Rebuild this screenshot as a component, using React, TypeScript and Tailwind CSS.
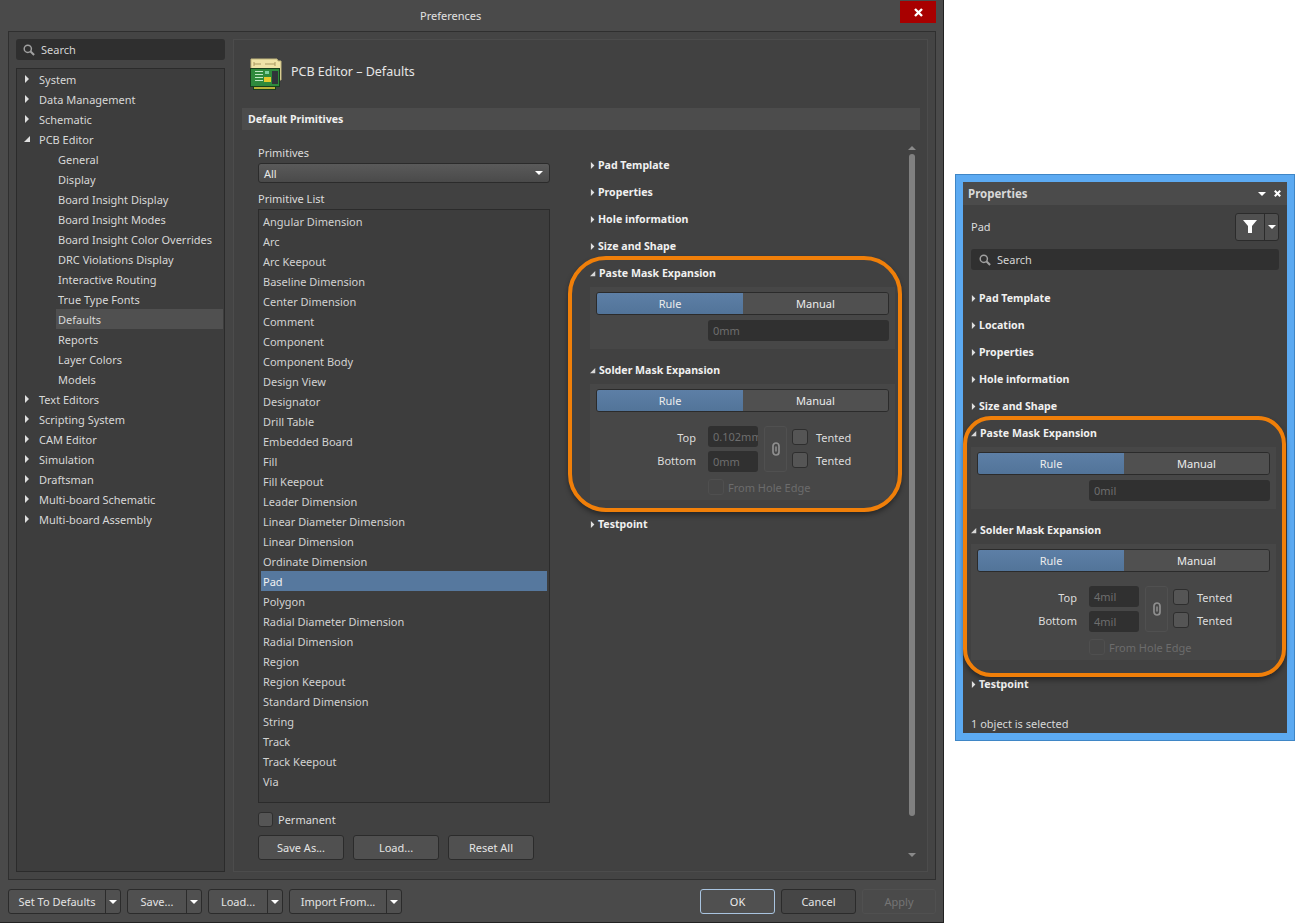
import React from 'react';

const treeItems: [string, number, string][] = [
  ['System', 0, 'closed'], ['Data Management', 0, 'closed'], ['Schematic', 0, 'closed'], ['PCB Editor', 0, 'open'],
  ['General', 1, ''], ['Display', 1, ''], ['Board Insight Display', 1, ''], ['Board Insight Modes', 1, ''],
  ['Board Insight Color Overrides', 1, ''], ['DRC Violations Display', 1, ''], ['Interactive Routing', 1, ''],
  ['True Type Fonts', 1, ''], ['Defaults', 1, 'selected'], ['Reports', 1, ''], ['Layer Colors', 1, ''], ['Models', 1, ''],
  ['Text Editors', 0, 'closed'], ['Scripting System', 0, 'closed'], ['CAM Editor', 0, 'closed'], ['Simulation', 0, 'closed'],
  ['Draftsman', 0, 'closed'], ['Multi-board Schematic', 0, 'closed'], ['Multi-board Assembly', 0, 'closed'],
];

const primitives = [
  'Angular Dimension', 'Arc', 'Arc Keepout', 'Baseline Dimension', 'Center Dimension', 'Comment', 'Component',
  'Component Body', 'Design View', 'Designator', 'Drill Table', 'Embedded Board', 'Fill', 'Fill Keepout',
  'Leader Dimension', 'Linear Diameter Dimension', 'Linear Dimension', 'Ordinate Dimension', 'Pad', 'Polygon',
  'Radial Diameter Dimension', 'Radial Dimension', 'Region', 'Region Keepout', 'Standard Dimension', 'String',
  'Track', 'Track Keepout', 'Via',
];

function Tri({ dir, className = '' }: { dir: 'right' | 'open' | 'down' | 'up'; className?: string }) {
  const pts = { right: '1,0 5,4 1,8', open: '0,7 6,7 6,1', down: '0,2 8,2 4,6', up: '0,6 8,6 4,2' }[dir];
  return (
    <svg width="8" height="8" viewBox="0 0 8 8" className={`shrink-0 ${className}`}>
      <polygon points={pts} fill="currentColor" />
    </svg>
  );
}

function SearchIcon({ size = 12 }: { size?: number }) {
  return (
    <svg width={size} height={size} viewBox="0 0 13 13" fill="none" stroke="#a0a0a0" className="shrink-0">
      <circle cx="5.2" cy="5.2" r="3.9" strokeWidth="1.6" />
      <path d="M8.2 8.2 L12 12" strokeWidth="2.2" />
    </svg>
  );
}

function LinkIcon() {
  return (
    <svg width="8" height="14" viewBox="0 0 8 14" fill="none" stroke="#8f8f8f">
      <rect x="1" y="1" width="6" height="12" rx="3" strokeWidth="1.7" />
      <path d="M4 4.5 V9.5" strokeWidth="1.5" />
    </svg>
  );
}

function PcbIcon() {
  return (
    <svg width="33" height="33" viewBox="0 0 33 33" className="shrink-0">
      <path d="M1 1 H27 L28 3 H31 V22 H1 Z" fill="#efe4a8" stroke="#c2b67c" strokeWidth="1" />
      <path d="M4 6 H11 M15 6 H25 M4 4 V8 M25 4 V8" stroke="#a89a62" strokeWidth="1" fill="none" />
      <rect x="0.5" y="10.5" width="29" height="18" fill="#2f8a3d" stroke="#173f1c" strokeWidth="1" />
      <rect x="5" y="13" width="8" height="1" fill="#bfe7c4" />
      <rect x="5" y="16" width="8" height="1" fill="#bfe7c4" />
      <rect x="5" y="19" width="8" height="1" fill="#bfe7c4" />
      <rect x="5" y="22" width="8" height="1" fill="#bfe7c4" />
      <rect x="14" y="19" width="7" height="5" fill="#e4c92c" />
      <rect x="22" y="13" width="6" height="13" fill="#30343a" />
      <rect x="15" y="13" width="4" height="3" fill="#7fd0a0" />
      <rect x="3.5" y="28.5" width="22" height="3" fill="#b9b03a" stroke="#173f1c" strokeWidth="1" />
    </svg>
  );
}

function Check({ disabled = false, className = 'w-[16px] h-[16px]' }: { disabled?: boolean; className?: string }) {
  return (
    <span className={`block shrink-0 rounded-[3px] border ${className} ${disabled ? 'border-[#4f4f4f] bg-[#474747]' : 'border-[#2e2e2e] bg-[#555555]'}`} />
  );
}

function Btn({ label, className = '' }: { label: string; className?: string }) {
  return (
    <div className={`h-[25px] flex items-center justify-center rounded-[3px] border border-[#2b2b2b] bg-[#505050] text-[#e4e4e4] ${className}`}>
      {label}
    </div>
  );
}

function SplitBtn({ label, width }: { label: string; width: string }) {
  return (
    <div className={`h-[25px] flex items-stretch rounded-[3px] border border-[#2b2b2b] bg-[#505050] text-[#e4e4e4] ${width}`}>
      <span className="flex-1 flex items-center justify-center">{label}</span>
      <span className="w-[15px] flex items-center justify-center border-l border-[#2b2b2b] text-white">
        <Tri dir="down" />
      </span>
    </div>
  );
}

function Toggle() {
  return (
    <div className="h-[23px] flex rounded-[3px] border border-[#2b2b2b] overflow-hidden text-[#ececec]">
      <span className="w-[146px] flex items-center justify-center bg-gradient-to-b from-[#5d7fa6] to-[#527499]">Rule</span>
      <span className="flex-1 flex items-center justify-center bg-[#505050]">Manual</span>
    </div>
  );
}

function Collapsed({ label }: { label: string }) {
  return (
    <div className="h-[27px] flex items-center gap-[1px] font-bold text-[10.6px] text-[#f0f0f0]">
      <Tri dir="right" className="text-[#e0e0e0] w-[7px] h-[7px]" />
      <span>{label}</span>
    </div>
  );
}

function Opened({ label }: { label: string }) {
  return (
    <div className="h-[27px] flex items-center gap-[2px] font-bold text-[10.6px] text-[#f0f0f0]">
      <Tri dir="open" className="text-[#d8d8d8] w-[7px] h-[7px]" />
      <span>{label}</span>
    </div>
  );
}

function Field({ value, className = '' }: { value: string; className?: string }) {
  return (
    <div className={`h-[21px] flex items-center overflow-hidden whitespace-nowrap px-[5px] rounded-[3px] bg-[#303030] text-[#6e6e6e] ${className}`}>
      {value}
    </div>
  );
}

function MaskSections({ paste, top, bottom }: { paste: string; top: string; bottom: string }) {
  return (
    <>
      <Opened label="Paste Mask Expansion" />
      <div className="w-[305px] bg-[#474747] px-[6px] pt-[5px] pb-[8px]">
        <Toggle />
        <div className="flex justify-end mt-[5px]">
          <Field value={paste} className="w-[181px]" />
        </div>
      </div>
      <div className="h-[8px]" />
      <Opened label="Solder Mask Expansion" />
      <div className="w-[305px] bg-[#474747] px-[6px] pt-[5px] pb-[5px]">
        <Toggle />
        <div className="flex mt-[14px]">
          <div className="w-[112px] shrink-0 flex flex-col items-end text-[#dcdcdc] pr-[12px]">
            <span className="h-[23px] leading-[24px]">Top</span>
            <span className="h-[23px] leading-[24px]">Bottom</span>
          </div>
          <div className="flex flex-col gap-[4px]">
            <Field value={top} className="w-[50px]" />
            <Field value={bottom} className="w-[50px]" />
          </div>
          <div className="ml-[6px] w-[23px] h-[46px] flex items-center justify-center rounded-[3px] border border-[#505050] bg-[#484848]">
            <LinkIcon />
          </div>
          <div className="ml-[5px] flex flex-col gap-[7px] pt-[3px] text-[#dcdcdc]">
            <div className="flex items-center gap-[8px] h-[16px]"><Check /><span>Tented</span></div>
            <div className="flex items-center gap-[8px] h-[16px]"><Check /><span>Tented</span></div>
          </div>
        </div>
        <div className="flex items-center gap-[4px] mt-[7px] ml-[112px] text-[#6c6c6c]">
          <Check disabled />
          <span>From Hole Edge</span>
        </div>
      </div>
    </>
  );
}

export default function App() {
  return (
    <div className="flex items-start bg-white w-[1298px] h-[923px] overflow-hidden text-[11px] leading-none font-['Noto_Sans','Liberation_Sans',sans-serif]">
      {/* preferences dialog */}
      <div className="relative w-[944px] h-[923px] shrink-0 flex flex-col bg-[#4a4a4a] border-r border-b border-[#222222]">
        <div className="h-[31px] shrink-0 flex items-start">
          <span className="ml-[420px] mt-[10px] text-[#e2e2e2]">Preferences</span>
          <div className="ml-auto mr-[7px] w-[36px] h-[22px] mt-[1px] flex items-center justify-center bg-[#a80000]">
            <svg width="9" height="9" viewBox="0 0 9 9" stroke="white" strokeWidth="2.4"><path d="M1 1 L8 8 M8 1 L1 8" /></svg>
          </div>
        </div>
        <div className="ml-[8px] w-[928px] h-[849px] shrink-0 flex gap-[8px] border border-[#2f2f2f] bg-[#444444] pl-[7px] pr-[7px] pt-[7px] pb-[7px]">
          <div className="w-[209px] shrink-0 flex flex-col gap-[8px]">
            <div className="h-[21px] flex items-center gap-[6px] pl-[7px] rounded-[3px] bg-[#2f2f2f] text-[#d4d4d4]">
              <SearchIcon />
              <span>Search</span>
            </div>
            <div className="flex-1 border border-[#2b2b2b] bg-[#3d3d3d] pl-[1px] pr-[1px]">
              {treeItems.map(([label, depth, state]) => (
                <div key={label} className={`h-[20px] flex items-center text-[#d8d8d8] ${depth === 1 ? 'pl-[40px]' : 'pl-[6px]'} ${state === 'selected' ? 'bg-[#505050] ml-[38px] !pl-[2px]' : ''}`}>
                  {state === 'closed' && <Tri dir="right" className="text-[#e0e0e0] mr-[7px]" />}
                  {state === 'open' && <Tri dir="open" className="text-[#e0e0e0] mr-[7px]" />}
                  <span>{label}</span>
                </div>
              ))}
            </div>
          </div>

          <div className="flex-1 flex flex-col border border-[#4c4c4c] bg-[#414141] px-[8px]">
            <div className="h-[68px] shrink-0 flex items-center gap-[8px] pl-[8px]">
              <PcbIcon />
              <span className="mb-[3px] text-[12.5px] text-[#e6e6e6]">PCB Editor – Defaults</span>
            </div>
            <div className="h-[22px] shrink-0 flex items-center pl-[6px] mr-[-1px] bg-[#4c4c4c] font-bold text-[10.6px] text-[#f0f0f0]">Default Primitives</div>
            <div className="flex-1 flex pl-[16px]">
              <div className="w-[292px] shrink-0 flex flex-col">
                <div className="mt-[17px] h-[11px] flex items-center text-[#dcdcdc]">Primitives</div>
                <div className="mt-[5px] h-[20px] flex items-center justify-between pl-[5px] pr-[6px] rounded-[3px] border border-[#2b2b2b] bg-gradient-to-b from-[#5a5a5a] to-[#4a4a4a] text-[#e8e8e8]">
                  All
                  <Tri dir="down" className="text-white" />
                </div>
                <div className="mt-[10px] h-[11px] flex items-center text-[#dcdcdc]">Primitive List</div>
                <div className="mt-[5px] h-[594px] border border-[#2b2b2b] bg-[#3d3d3d] px-[2px] pt-[1px] flex flex-col">
                  {primitives.map((p) => (
                    <div key={p} className={`h-[20px] shrink-0 flex items-center pl-[2px] ${p === 'Pad' ? 'bg-[#56789e] text-[#f2f2f2]' : 'text-[#d2d2d2]'}`}>{p}</div>
                  ))}
                </div>
                <div className="mt-[9px] flex items-center gap-[5px] text-[#dcdcdc] h-[15px]">
                  <Check className="w-[15px] h-[15px]" />
                  <span>Permanent</span>
                </div>
                <div className="mt-[8px] flex gap-[9px]">
                  <Btn label="Save As..." className="w-[86px]" />
                  <Btn label="Load..." className="w-[86px]" />
                  <Btn label="Reset All" className="w-[86px]" />
                </div>
              </div>

              <div className="flex-1 flex ml-[40px]">
                <div className="w-[308px] pt-[22px] flex flex-col">
                  <Collapsed label="Pad Template" />
                  <Collapsed label="Properties" />
                  <Collapsed label="Hole information" />
                  <Collapsed label="Size and Shape" />
                  <MaskSections paste="0mm" top="0.102mm" bottom="0mm" />
                  <div className="h-[11px]" />
                  <Collapsed label="Testpoint" />
                </div>
                <div className="ml-[11px] w-[6px] mt-[14px] mb-[12px] flex flex-col items-center text-[#8a8a8a]">
                  <Tri dir="up" />
                  <div className="w-[6px] h-[662px] mt-[2px] rounded-[3px] bg-[#808080]" />
                  <div className="flex-1" />
                  <Tri dir="down" />
                </div>
              </div>
            </div>
          </div>
        </div>
        <div className="flex-1 flex items-start pt-[9px] pl-[8px] pr-[7px] gap-[6px]">
          <SplitBtn label="Set To Defaults" width="w-[113px]" />
          <SplitBtn label="Save..." width="w-[75px]" />
          <SplitBtn label="Load..." width="w-[75px]" />
          <SplitBtn label="Import From..." width="w-[113px]" />
          <div className="ml-auto flex gap-[6px]">
            <div className="w-[75px] h-[25px] flex items-center justify-center rounded-[3px] border border-[#a9c4e0] bg-[#505050] text-[#ececec]">OK</div>
            <Btn label="Cancel" className="w-[75px] !bg-[#464646]" />
            <div className="w-[74px] h-[25px] flex items-center justify-center rounded-[3px] border border-[#505050] text-[#757575]">Apply</div>
          </div>
        </div>
        {/* annotation ring */}
        <div className="absolute left-[568px] top-[256px] w-[334px] h-[256px] rounded-[38px] border-[4px] border-[#f07f09] shadow-[0_3px_5px_rgba(0,0,0,0.4)]" />
      </div>

      {/* properties panel */}
      <div className="relative ml-[11px] mt-[174px] w-[340px] h-[567px] shrink-0 border border-[#3f86c6] bg-[#5caaf2] p-[7px]">
        <div className="h-full flex flex-col bg-[#414141]">
          <div className="h-[23px] shrink-0 flex items-center justify-between pl-[5px] pr-[6px] bg-[#4b4b4b] font-bold text-[11.5px] text-[#d8d8d8]">
            Properties
            <div className="flex items-center gap-[8px] text-white">
              <Tri dir="down" />
              <svg width="7" height="7" viewBox="0 0 9 9" stroke="white" strokeWidth="2.6"><path d="M1 1 L8 8 M8 1 L1 8" /></svg>
            </div>
          </div>
          <div className="mt-[8px] h-[27px] shrink-0 flex items-center justify-between pl-[8px] pr-[8px] text-[#dcdcdc]">
            Pad
            <div className="flex w-[44px] h-[28px] rounded-[3px] border border-[#2b2b2b] bg-[#505050] text-white">
              <span className="w-[29px] flex items-center justify-center border-r border-[#2b2b2b]">
                <svg width="14" height="13" viewBox="0 0 14 13"><path d="M0 0 H14 L9 6 V13 H5 V6 Z" fill="white" /></svg>
              </span>
              <span className="flex-1 flex items-center justify-center"><Tri dir="down" /></span>
            </div>
          </div>
          <div className="mt-[9px] mx-[8px] h-[21px] shrink-0 flex items-center gap-[6px] pl-[8px] rounded-[3px] bg-[#303030] text-[#d4d4d4]">
            <SearchIcon />
            <span>Search</span>
          </div>
          <div className="flex-1 flex flex-col pl-[8px] pt-[15px]">
            <Collapsed label="Pad Template" />
            <Collapsed label="Location" />
            <Collapsed label="Properties" />
            <Collapsed label="Hole information" />
            <Collapsed label="Size and Shape" />
            <MaskSections paste="0mil" top="4mil" bottom="4mil" />
            <div className="h-[11px]" />
            <Collapsed label="Testpoint" />
            <div className="mt-auto mb-[3px] h-[14px] flex items-center text-[#d8d8d8]">1 object is selected</div>
          </div>
        </div>
        {/* annotation ring */}
        <div className="absolute left-[7px] top-[241px] w-[323px] h-[261px] rounded-[28px] border-[4px] border-[#f07f09] shadow-[0_3px_5px_rgba(0,0,0,0.4)]" />
      </div>
    </div>
  );
}
